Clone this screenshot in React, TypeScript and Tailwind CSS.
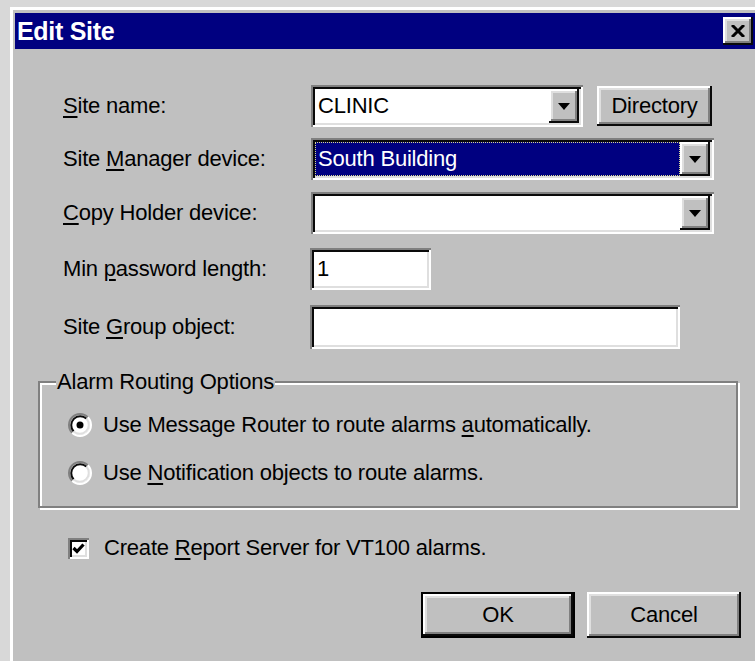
import type { ReactNode } from "react";

// classic 3D bevels, drawn with stacked inset shadows
const sunken =
  "bg-white shadow-[inset_2px_2px_0_#808080,inset_-2px_-2px_0_#ffffff,inset_4px_4px_0_#0a0a0a,inset_-4px_-4px_0_#dfdfdf]";
const raised =
  "bg-[#c0c0c0] shadow-[inset_-2px_-2px_0_#0a0a0a,inset_2px_2px_0_#ffffff,inset_-4px_-4px_0_#808080,inset_4px_4px_0_#dfdfdf]";

function Key({ children }: { children: ReactNode }) {
  return <span className="underline decoration-2 underline-offset-[3px]">{children}</span>;
}

function DropArrow() {
  return (
    <div className={`${raised} flex h-[34px] w-[30px] shrink-0 items-center justify-center`}>
      <svg width="12" height="7" viewBox="0 0 12 7">
        <path d="M0 0 H12 L6 7 Z" fill="#000" />
      </svg>
    </div>
  );
}

function Combo({
  width,
  children,
}: {
  width: string;
  children?: ReactNode;
}) {
  return (
    <div className={`${sunken} ${width} flex h-[42px] items-center p-[4px]`}>
      <div className="flex h-full min-w-0 flex-1 items-center">{children}</div>
      <DropArrow />
    </div>
  );
}

function Radio({ checked }: { checked?: boolean }) {
  return (
    <svg width="24" height="24" viewBox="0 0 24 24" className="shrink-0">
      <circle cx="12" cy="12" r="10" fill="#fff" />
      <path d="M4.22 19.78 A11 11 0 0 1 19.78 4.22" fill="none" stroke="#808080" strokeWidth="2" />
      <path d="M19.78 4.22 A11 11 0 0 1 4.22 19.78" fill="none" stroke="#fff" strokeWidth="2" />
      <path d="M5.64 18.36 A9 9 0 0 1 18.36 5.64" fill="none" stroke="#0a0a0a" strokeWidth="2" />
      <path d="M18.36 5.64 A9 9 0 0 1 5.64 18.36" fill="none" stroke="#dfdfdf" strokeWidth="2" />
      {checked && <circle cx="12" cy="12" r="3.5" fill="#000" />}
    </svg>
  );
}

function Button({
  children,
  isDefault,
  className,
}: {
  children: ReactNode;
  isDefault?: boolean;
  className: string;
}) {
  if (isDefault) {
    return (
      <div className={`${className} border-2 border-black`}>
        <div className={`${raised} flex h-full w-full items-center justify-center`}>{children}</div>
      </div>
    );
  }
  return <div className={`${raised} ${className} flex items-center justify-center`}>{children}</div>;
}

export default function App() {
  return (
    <div className="h-[661px] w-[755px] overflow-hidden bg-[#d8d8d8] pl-[10px] pt-[7px] font-['Liberation_Sans',Arial,sans-serif] text-[22px] leading-none tracking-[-0.2px] text-black">
      <div className="h-[700px] w-[747px] border-l-[3px] border-t-[3px] border-white bg-[#c0c0c0] px-[2px] pt-[3px]">
        {/* title bar */}
        <div className="flex h-[36px] items-center justify-between bg-[#000080] pl-[2px] pr-[2px]">
          <span className="text-[25px] font-bold tracking-[-0.3px] text-white">Edit Site</span>
          <div className={`${raised} flex h-[28px] w-[30px] items-center justify-center`}>
            <svg width="14" height="12" viewBox="0 0 14 12">
              <path d="M1 0 L13 12 M13 0 L1 12" stroke="#000" strokeWidth="3" />
            </svg>
          </div>
        </div>

        <div className="flex flex-col pl-[48px] pt-[36px]">
          <div className="flex h-[42px] items-center">
            <span className="w-[248px]">
              <Key>S</Key>ite name:
            </span>
            <Combo width="w-[272px]">
              <span className="pl-[3px]">CLINIC</span>
            </Combo>
            <Button className="ml-[14px] h-[40px] w-[115px]">Directory</Button>
          </div>

          <div className="mt-[11px] flex h-[42px] items-center">
            <span className="w-[248px]">
              Site <Key>M</Key>anager device:
            </span>
            <Combo width="w-[403px]">
              <div className="flex h-full w-full items-center border border-dotted border-[#d8d890] bg-[#000080] pl-[2px] text-white">
                South Building
              </div>
            </Combo>
          </div>

          <div className="mt-[12px] flex h-[42px] items-center">
            <span className="w-[248px]">
              <Key>C</Key>opy Holder device:
            </span>
            <Combo width="w-[403px]" />
          </div>

          <div className="mt-[14px] flex h-[42px] items-center">
            <span className="w-[247px]">
              Min <Key>p</Key>assword length:
            </span>
            <div className={`${sunken} flex h-[42px] w-[121px] items-center pl-[7px]`}>1</div>
          </div>

          <div className="mt-[15px] flex h-[44px] items-center">
            <span className="w-[247px]">
              Site <Key>G</Key>roup object:
            </span>
            <div className={`${sunken} h-[44px] w-[370px]`} />
          </div>
        </div>

        {/* Alarm Routing Options group */}
        <div className="relative ml-[23px] mt-[32px] h-[127px] w-[700px] border-2 border-[#808080] shadow-[inset_2px_2px_0_#ffffff,2px_2px_0_#ffffff]">
          <span className="absolute left-[16px] top-[-12px] bg-[#c0c0c0] px-[1px]">Alarm Routing Options</span>
          <div className="flex flex-col pl-[28px] pt-[30px]">
            <div className="flex h-[24px] items-center gap-[11px]">
              <Radio checked />
              <span>
                Use Message Router to route alarms <Key>a</Key>utomatically.
              </span>
            </div>
            <div className="mt-[24px] flex h-[24px] items-center gap-[11px]">
              <Radio />
              <span>
                Use <Key>N</Key>otification objects to route alarms.
              </span>
            </div>
          </div>
        </div>

        <div className="ml-[53px] mt-[28px] flex h-[24px] items-center gap-[15px]">
          <div className={`${sunken} flex h-[21px] w-[21px] items-center justify-center`}>
            <svg width="13" height="11" viewBox="0 0 13 11">
              <path d="M1.5 5 L5 8.5 L11.5 1.5" fill="none" stroke="#000" strokeWidth="3.2" />
            </svg>
          </div>
          <span>
            Create <Key>R</Key>eport Server for VT100 alarms.
          </span>
        </div>

        <div className="mt-[32px] flex justify-end gap-[12px] pr-[14px]">
          <Button isDefault className="h-[46px] w-[154px]">
            OK
          </Button>
          <Button className="h-[46px] w-[154px]">Cancel</Button>
        </div>
      </div>
    </div>
  );
}
